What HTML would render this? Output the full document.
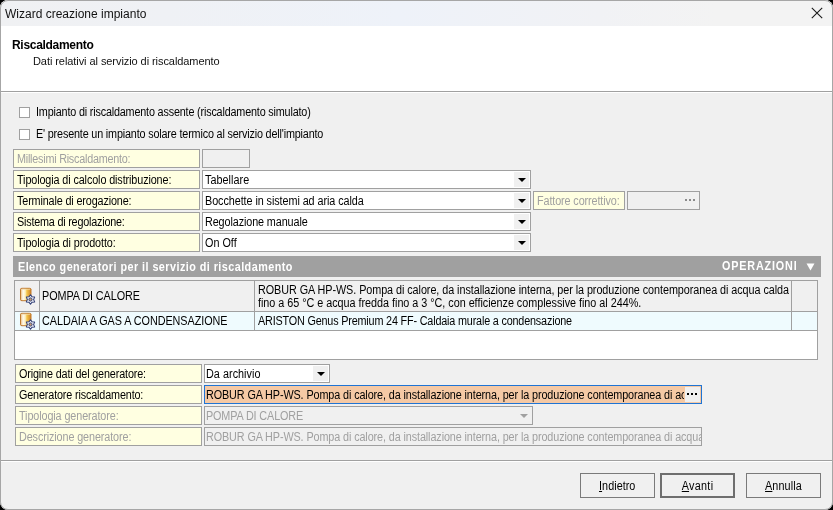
<!DOCTYPE html>
<html><head><meta charset="utf-8">
<style>
*{margin:0;padding:0;box-sizing:border-box}
html,body{width:833px;height:510px;overflow:hidden;background:#000;font-family:"Liberation Sans",sans-serif;color:#000;font-size:12px}
.win{position:absolute;left:0;top:0;width:833px;height:510px;background:#f0f0f0;border-radius:8px;overflow:hidden;will-change:transform}
.frame{position:absolute;left:0;top:0;width:833px;height:510px;border:1px solid #a6a6a6;border-radius:8px}
.abs{position:absolute;white-space:nowrap}
.s{display:inline-block;font-size:12px;transform:scaleX(0.9);transform-origin:0 0;white-space:nowrap;position:relative;top:1px}
.title{position:absolute;left:0;top:0;width:833px;height:26px;background:linear-gradient(90deg,#f0f1f3 0%,#eff1f5 20%,#eef2f9 48%,#f1f2f5 72%,#f3f3f3 86%)}
.hdr{position:absolute;left:0;top:26px;width:833px;height:66px;background:#fff;border-bottom:1px solid #a0a0a0}
.lbl{position:absolute;left:13px;width:187px;height:19px;background:#ffffe1;border:1px solid #a0a0a0;line-height:17px;padding-left:3.3px;white-space:nowrap;overflow:hidden}
.dis{color:#a0a0a0}
.inp{position:absolute;height:19px;background:#fff;border:1px solid #a0a0a0;line-height:17px;padding-left:2px;white-space:nowrap;overflow:hidden}
.arr{position:absolute;right:1px;top:1px;width:15px;height:15px;background:#f0f0f0}
.arr:after{content:"";position:absolute;left:4px;top:6px;border-left:4px solid transparent;border-right:4px solid transparent;border-top:4px solid #000}
.arr.g{background:transparent}
.arr.g:after{border-top-color:#a0a0a0}
.cb{position:absolute;width:11px;height:11px;border:1px solid #a0a0a0;background:#fff}
.btn{position:absolute;top:473px;width:75px;height:25px;border:1px solid #7a7a7a;background:#f0f0f0;line-height:22px;padding-top:1px;text-align:center}
.btn .s{transform-origin:50% 0;top:0}
.grid{position:absolute;left:14px;top:280px;width:804px;height:80px;background:#fff;border:1px solid #a0a0a0}
.cell{position:absolute;border-right:1px solid #a0a0a0;border-bottom:1px solid #a0a0a0;white-space:nowrap;overflow:hidden}
</style></head><body>
<div class="win">
  <div class="title"></div>
  <div class="abs" style="left:5px;top:6px;font-size:12px;line-height:16px;color:#111">Wizard creazione impianto</div>
  <svg class="abs" style="left:811px;top:7px" width="12" height="12" viewBox="0 0 12 12"><path d="M0.8 0.8L11.2 11.2M11.2 0.8L0.8 11.2" stroke="#1a1a1a" stroke-width="1.1"/></svg>
  <div class="hdr"></div>
  <div class="abs" style="left:12px;top:38px;font-size:12px;font-weight:bold;line-height:14px;letter-spacing:-0.3px">Riscaldamento</div>
  <div class="abs" style="left:33px;top:54px;font-size:11px;line-height:14px;color:#111;letter-spacing:-0.07px">Dati relativi al servizio di riscaldamento</div>

  <div class="cb" style="left:19px;top:107px"></div>
  <div class="abs" style="left:36px;top:104px;line-height:14px"><span class="s" style="letter-spacing:-0.190px">Impianto di riscaldamento assente (riscaldamento simulato)</span></div>
  <div class="cb" style="left:19px;top:129px"></div>
  <div class="abs" style="left:36px;top:126px;line-height:14px"><span class="s" style="letter-spacing:-0.182px">E' presente un impianto solare termico al servizio dell'impianto</span></div>

  <div class="lbl dis" style="top:149px"><span class="s" style="letter-spacing:-0.252px">Millesimi Riscaldamento:</span></div>
  <div class="inp" style="left:202px;top:149px;width:48px;background:#f0f0f0"></div>

  <div class="lbl" style="top:170px"><span class="s" style="letter-spacing:-0.120px">Tipologia di calcolo distribuzione:</span></div>
  <div class="inp" style="left:202px;top:170px;width:329px"><span class="s" style="letter-spacing:0.052px">Tabellare</span><div class="arr"></div></div>
  <div class="lbl" style="top:191px"><span class="s" style="letter-spacing:-0.149px">Terminale di erogazione:</span></div>
  <div class="inp" style="left:202px;top:191px;width:329px"><span class="s" style="letter-spacing:-0.072px">Bocchette in sistemi ad aria calda</span><div class="arr"></div></div>
  <div class="lbl dis" style="left:533px;top:191px;width:92px"><span class="s" style="letter-spacing:-0.119px">Fattore correttivo:</span></div>
  <div class="inp" style="left:627px;top:191px;width:73px;background:#f0f0f0">
    <svg class="abs" style="left:57px;top:7px" width="12" height="3"><rect x="0" y="0" width="2" height="2" fill="#8a8a8a"/><rect x="4" y="0" width="2" height="2" fill="#8a8a8a"/><rect x="8" y="0" width="2" height="2" fill="#8a8a8a"/></svg>
  </div>
  <div class="lbl" style="top:212px"><span class="s" style="letter-spacing:-0.225px">Sistema di regolazione:</span></div>
  <div class="inp" style="left:202px;top:212px;width:329px"><span class="s" style="letter-spacing:-0.110px">Regolazione manuale</span><div class="arr"></div></div>
  <div class="lbl" style="top:233px"><span class="s" style="letter-spacing:-0.090px">Tipologia di prodotto:</span></div>
  <div class="inp" style="left:202px;top:233px;width:329px"><span class="s" style="letter-spacing:0.014px">On Off</span><div class="arr"></div></div>

  <div class="abs" style="left:13px;top:256px;width:808px;height:21px;background:#a0a0a0"></div>
  <div class="abs" style="left:18px;top:259px;color:#fff;line-height:15px"><span class="s" style="font-weight:bold;letter-spacing:0.505px">Elenco generatori per il servizio di riscaldamento</span></div>
  <div class="abs" style="left:722px;top:258px;color:#fff;line-height:15px"><span class="s" style="font-weight:bold;letter-spacing:0.922px">OPERAZIONI</span></div>
  <svg class="abs" style="left:806px;top:262px" width="9" height="9" viewBox="0 0 9 9"><path d="M0.5 1.5H8.5L4.5 8.5Z" fill="#fff"/></svg>

  <div class="grid">
    <div class="cell" style="left:0;top:0;width:25px;height:31px;background:#f0f0f0"></div>
    <div class="cell" style="left:25px;top:0;width:215px;height:31px;background:#f0f0f0;line-height:28px;padding-left:2px"><span class="s" style="letter-spacing:-0.069px">POMPA DI CALORE</span></div>
    <div class="cell" style="left:240px;top:0;width:537px;height:31px;background:#f0f0f0;line-height:13px;padding:2px 0 0 3px"><span class="s" style="letter-spacing:-0.061px">ROBUR GA HP-WS. Pompa di calore, da installazione interna, per la produzione contemporanea di acqua calda</span><br><span class="s" style="letter-spacing:-0.023px">fino a 65 °C e acqua fredda fino a 3 °C, con efficienze complessive fino al 244%.</span></div>
    <div class="cell" style="left:777px;top:0;width:25px;border-right:0;height:31px;background:#f0f0f0"></div>
    <div class="cell" style="left:0;top:31px;width:25px;height:19px;background:#effbfe"></div>
    <div class="cell" style="left:25px;top:31px;width:215px;height:19px;background:#effbfe;line-height:17px;padding-left:2px"><span class="s" style="letter-spacing:-0.048px">CALDAIA A GAS A CONDENSAZIONE</span></div>
    <div class="cell" style="left:240px;top:31px;width:537px;height:19px;background:#effbfe;line-height:17px;padding-left:3px"><span class="s" style="letter-spacing:-0.189px">ARISTON Genus Premium 24 FF- Caldaia murale a condensazione</span></div>
    <div class="cell" style="left:777px;top:31px;width:25px;border-right:0;height:19px;background:#effbfe"></div>
  </div>
  <svg class="abs" style="left:17px;top:285px" width="20" height="22" viewBox="0 0 20 22"><defs><linearGradient id="cyl" x1="0" x2="1" y1="0" y2="0"><stop offset="0" stop-color="#e8b878"/><stop offset="0.25" stop-color="#fffbee"/><stop offset="0.45" stop-color="#fdf0c0"/><stop offset="0.6" stop-color="#f5c850"/><stop offset="1" stop-color="#d0801f"/></linearGradient></defs>
    <path d="M3.5 4.2Q3.5 3.3 5 3.3H12.5Q14 3.3 14 4.2V14.8Q14 15.7 12.5 15.7H5Q3.5 15.7 3.5 14.8Z" fill="url(#cyl)" stroke="#bf7a30" stroke-width="1"/>
    <path d="M4.3 4.3H13.2" stroke="#f3d9a8" stroke-width="0.8"/>
    <path d="M13.50 9.70 L15.05 11.82 L17.66 12.10 L16.60 14.50 L17.66 16.90 L15.05 17.18 L13.50 19.30 L11.95 17.18 L9.34 16.90 L10.40 14.50 L9.34 12.10 L11.95 11.82Z" fill="#f4f6fb" stroke="#34427a" stroke-width="1.05" stroke-linejoin="round"/>
    <circle cx="13.5" cy="14.5" r="1.6" fill="#c8a070" stroke="#34427a" stroke-width="1"/>
  </svg>
  <svg class="abs" style="left:17px;top:310px" width="20" height="22" viewBox="0 0 20 22">
    <path d="M3.5 4.2Q3.5 3.3 5 3.3H12.5Q14 3.3 14 4.2V14.8Q14 15.7 12.5 15.7H5Q3.5 15.7 3.5 14.8Z" fill="url(#cyl)" stroke="#bf7a30" stroke-width="1"/>
    <path d="M4.3 4.3H13.2" stroke="#f3d9a8" stroke-width="0.8"/>
    <path d="M13.50 9.70 L15.05 11.82 L17.66 12.10 L16.60 14.50 L17.66 16.90 L15.05 17.18 L13.50 19.30 L11.95 17.18 L9.34 16.90 L10.40 14.50 L9.34 12.10 L11.95 11.82Z" fill="#f4f6fb" stroke="#34427a" stroke-width="1.05" stroke-linejoin="round"/>
    <circle cx="13.5" cy="14.5" r="1.6" fill="#c8a070" stroke="#34427a" stroke-width="1"/>
  </svg>

  <div class="lbl" style="left:15px;top:364px"><span class="s" style="letter-spacing:-0.156px">Origine dati del generatore:</span></div>
  <div class="inp" style="padding-left:1px;left:204px;top:364px;width:126px"><span class="s" style="letter-spacing:0.048px">Da archivio</span><div class="arr"></div></div>
  <div class="lbl" style="left:15px;top:385px"><span class="s" style="letter-spacing:-0.163px">Generatore riscaldamento:</span></div>
  <div class="inp" style="padding-left:1px;left:204px;top:385px;width:498px;background:#f5c9a5;border-color:#1f74d4"><div style="width:478px;height:17px;overflow:hidden"><span class="s" style="letter-spacing:-0.110px">ROBUR GA HP-WS. Pompa di calore, da installazione interna, per la produzione contemporanea di acqua calda fino a 65 °C e acqua fredda fino a 3 °C</span></div>
    <div class="abs" style="left:480px;top:1px;width:15px;height:15px;background:#f0f0f0"><svg class="abs" style="left:2px;top:6px" width="12" height="3"><rect x="0" y="0" width="2" height="2" fill="#000"/><rect x="4" y="0" width="2" height="2" fill="#000"/><rect x="8" y="0" width="2" height="2" fill="#000"/></svg></div>
  </div>
  <div class="lbl dis" style="left:15px;top:406px"><span class="s" style="letter-spacing:-0.112px">Tipologia generatore:</span></div>
  <div class="inp dis" style="padding-left:1px;left:204px;top:406px;width:329px;background:#f0f0f0"><span class="s" style="letter-spacing:-0.128px">POMPA DI CALORE</span><div class="arr g"></div></div>
  <div class="lbl dis" style="left:15px;top:427px"><span class="s" style="letter-spacing:-0.114px">Descrizione generatore:</span></div>
  <div class="inp dis" style="padding-left:1px;left:204px;top:427px;width:498px;background:#f0f0f0"><span class="s" style="letter-spacing:-0.110px">ROBUR GA HP-WS. Pompa di calore, da installazione interna, per la produzione contemporanea di acqua calda fino a 65 °C e acqua fredda fino a 3 °C</span></div>

  <div class="abs" style="left:0;top:460px;width:833px;height:1px;background:#a0a0a0"></div>
  <div class="abs" style="left:0;top:461px;width:833px;height:1px;background:#fff"></div>
  <div class="abs" style="left:0;top:92px;width:833px;height:1px;background:#fff"></div>
  <div class="btn" style="left:580px"><span class="s" style="letter-spacing:0.052px"><u>I</u>ndietro</span></div>
  <div class="btn" style="left:660px;border:2px solid #6e6e6e;line-height:20px"><span class="s" style="letter-spacing:0.328px"><u>A</u>vanti</span></div>
  <div class="btn" style="left:746px"><span class="s" style="letter-spacing:0.123px"><u>A</u>nnulla</span></div>
</div>
<div class="frame"></div>
</body></html>
